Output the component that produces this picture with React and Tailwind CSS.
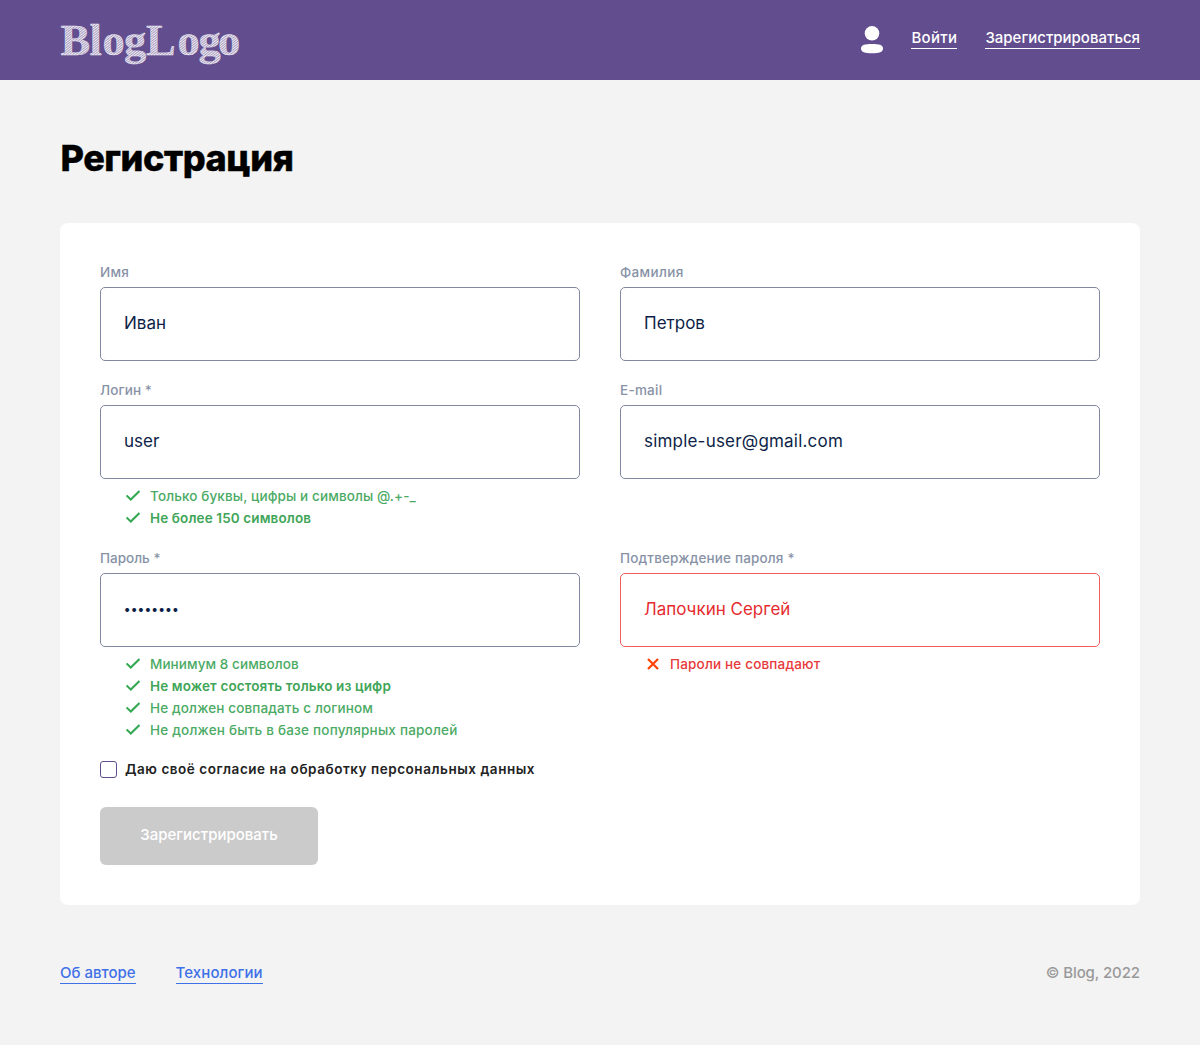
function Check() {
  return (
    <svg className="mb-px h-[11px] w-[14px] shrink-0" viewBox="0 0 14 11" fill="none">
      <path d="M0.5 5.4 4.8 9.5 13.5 0.9" stroke="#34A853" strokeWidth="2.1" />
    </svg>
  );
}

function Cross() {
  return (
    <svg className="mx-px h-3 w-3 shrink-0" viewBox="0 0 12 12" fill="none">
      <path d="M1 1 11 11M11 1 1 11" stroke="#FF4200" strokeWidth="2.2" />
    </svg>
  );
}

function Hint({ children, error, className = "" }) {
  return (
    <li className={`flex h-[22px] items-center gap-[10px] text-[13.5px] leading-[20px] ${error ? "text-[#E83A3A]" : ""}`}>
      {error ? <Cross /> : <Check />}
      <span className={`whitespace-nowrap ${className}`}>{children}</span>
    </li>
  );
}

function Field({ label, value, error, labelClass = "", valueClass = "text-[17px]", children }) {
  return (
    <div>
      <div className="flex h-[22px] items-center text-[13.5px] leading-[20px] font-medium text-[#8892A6]">
        <span className={labelClass}>{label}</span>
      </div>
      <div className={`mt-[4px] flex h-[74px] items-center rounded-[5px] border px-[23px] ${error ? "border-[#F15B5B] text-[#E52B2F]" : "border-[#8088A0] text-[#0D1F48]"}`}>
        <span className={valueClass}>{value}</span>
      </div>
      {children && <ul className="mt-[6px] pl-[26px]">{children}</ul>}
    </div>
  );
}

export default function App() {
  return (
    <div className="min-h-[1045px] bg-[#F3F3F3] font-['Inter',sans-serif]">
      <header className="flex h-20 items-center justify-between bg-[#624D8E] px-[60px]">
        <svg className="h-[80px] w-[182px]" viewBox="0 0 182 80">
          <defs>
            <pattern id="hatch" width="1.9" height="1.9" patternUnits="userSpaceOnUse" patternTransform="rotate(-38)">
              <rect width="1.9" height="1.9" fill="#fff" fillOpacity="0.45" />
              <rect width="1.9" height="0.95" fill="#fff" fillOpacity="0.8" />
            </pattern>
          </defs>
          <text y="54.5" x="0.5 29.500 42.500 64 86 117.500 138.500 158" fontSize="44.5" fontWeight="700" fontFamily="Liberation Serif, serif" fill="url(#hatch)" stroke="#fff" strokeWidth="0.35" strokeOpacity="0.8">BlogLogo</text>
        </svg>
        <nav className="flex items-center pb-1 text-[15px] leading-[20px] font-medium text-white">
          <svg className="mt-[3px] mr-[27px] h-7 w-[23px]" viewBox="0 0 23 28" fill="#fff">
            <circle cx="11" cy="7.3" r="7.3" />
            <path d="M11 18C18 18 22 18.800 22 22.600S18 27.300 11 27.300 0 26.400 0 22.600 4 18 11 18Z" />
          </svg>
          <a className="mr-7 border-b border-white tracking-[0.32px]">Войти</a>
          <a className="border-b border-white">Зарегистрироваться</a>
        </nav>
      </header>
      <main className="px-[60px] pt-[55px]">
        <h1 className="h-[46px] pl-[0.5px] text-[36px] leading-[46px] font-extrabold tracking-[-0.45px] text-black [-webkit-text-stroke:0.4px_#000]">Регистрация</h1>
        <form className="mt-[42px] h-[682px] rounded-lg bg-white px-10 pt-[38px]">
          <div className="grid grid-cols-2 gap-x-10">
            <div className="h-[118px]"><Field label="Имя" labelClass="tracking-[0.2px]" value="Иван" /></div>
            <Field label="Фамилия" labelClass="tracking-[0.35px]" value="Петров" />
            <div className="h-[168px]">
              <Field label="Логин *" labelClass="tracking-[0.1px]" value="user">
                <Hint className="font-medium tracking-[0.12px] text-[#4BAA64]">Только буквы, цифры и символы @.+-_</Hint>
                <Hint className="font-semibold tracking-[0.12px] text-[#3FA558]">Не более 150 символов</Hint>
              </Field>
            </div>
            <Field label="E-mail" labelClass="tracking-[0.25px]" value="simple-user@gmail.com" valueClass="text-[17px] tracking-[0.2px]" />
            <Field label="Пароль *" value="••••••••" valueClass="text-[12.5px] font-semibold tracking-[0.6px]">
              <Hint className="font-medium tracking-[0.08px] text-[#4BAA64]">Минимум 8 символов</Hint>
              <Hint className="font-semibold tracking-[0.12px] text-[#3FA558]">Не может состоять только из цифр</Hint>
              <Hint className="font-medium tracking-[0.14px] text-[#4BAA64]">Не должен совпадать с логином</Hint>
              <Hint className="font-medium tracking-[0.21px] text-[#4BAA64]">Не должен быть в базе популярных паролей</Hint>
            </Field>
            <Field label="Подтверждение пароля *" labelClass="tracking-[0.16px]" value="Лапочкин Сергей" error>
              <Hint error className="font-medium tracking-[0.17px]">Пароли не совпадают</Hint>
            </Field>
          </div>
          <label className="mt-[17px] flex h-[22px] items-center gap-2 text-[13.5px] leading-[20px] font-semibold text-[#222]">
            <span className="h-[17px] w-[17px] rounded-[3px] border border-[#624D8E]" />
            <span className="tracking-[0.54px]">Даю своё согласие на обработку персональных данных</span>
          </label>
          <button className="mt-[27px] h-[58px] w-[218px] rounded-md bg-[#CBCBCB] pb-[2px] text-[15px] font-medium text-white">Зарегистрировать</button>
        </form>
      </main>
      <footer className="mt-[58px] flex items-start justify-between px-[60px] text-[15px] leading-[20px] font-medium">
        <div className="flex gap-10 text-[#3E70E8]">
          <a className="border-b border-[#3E70E8]">Об авторе</a>
          <a className="border-b border-[#3E70E8] tracking-[0.08px]">Технологии</a>
        </div>
        <span className="tracking-[-0.1px] text-[#999]">© Blog, 2022</span>
      </footer>
    </div>
  );
}
